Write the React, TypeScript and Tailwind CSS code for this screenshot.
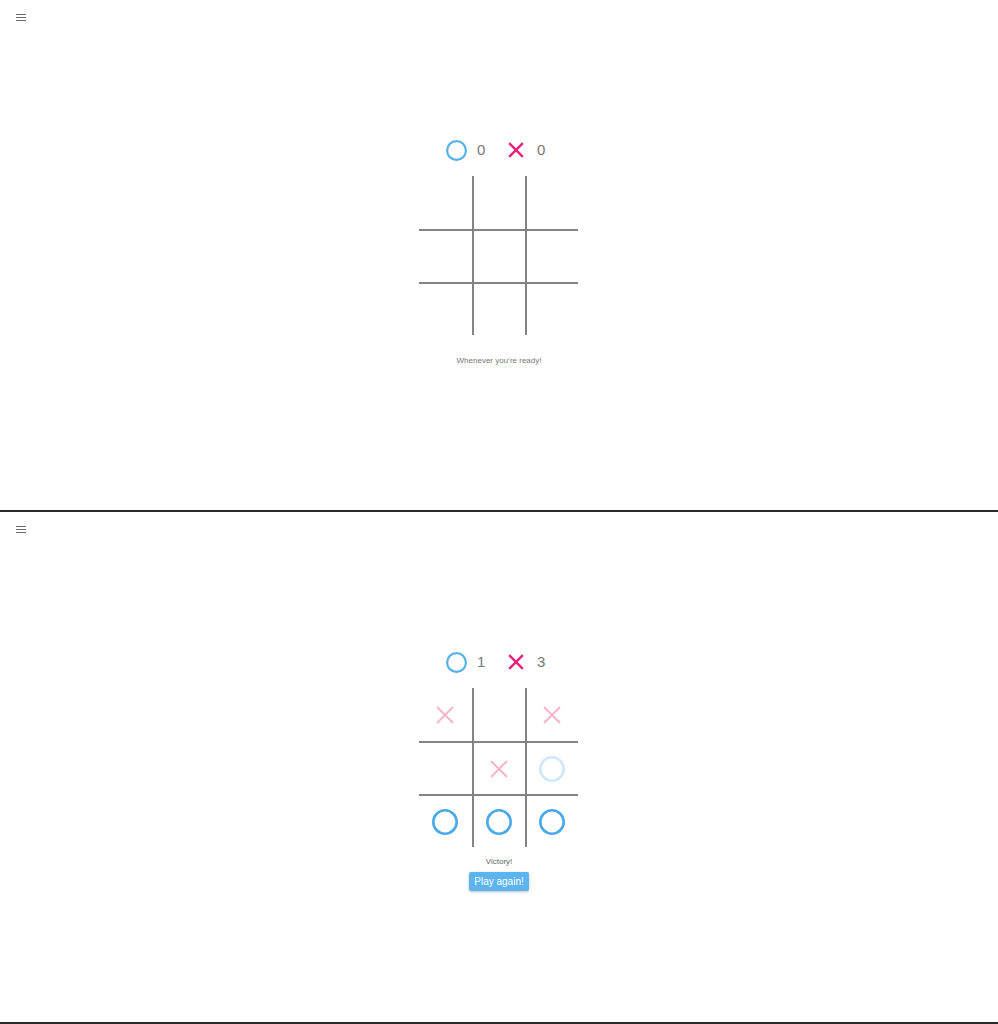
import React from "react";

type Mark = "x" | "o" | "o-faded" | null;

const font = { fontFamily: '"Liberation Sans", Arial, sans-serif' };

function Menu() {
  return (
    <div className="absolute left-[16px] top-[14px] flex w-[10px] flex-col gap-[2px]">
      <span className="block h-px w-full bg-[#6b6b6b]" />
      <span className="block h-px w-full bg-[#6b6b6b]" />
      <span className="block h-px w-full bg-[#6b6b6b]" />
    </div>
  );
}

function Ring({ size, stroke, color }: { size: number; stroke: number; color: string }) {
  const r = size / 2 - stroke / 2;
  return (
    <svg width={size} height={size} viewBox={`0 0 ${size} ${size}`} className="block">
      <circle cx={size / 2} cy={size / 2} r={r} fill="none" stroke={color} strokeWidth={stroke} />
    </svg>
  );
}

function Cross({ size, stroke, color }: { size: number; stroke: number; color: string }) {
  const p = stroke / 2;
  return (
    <svg width={size} height={size} viewBox={`0 0 ${size} ${size}`} className="block">
      <line x1={p} y1={p} x2={size - p} y2={size - p} stroke={color} strokeWidth={stroke} />
      <line x1={size - p} y1={p} x2={p} y2={size - p} stroke={color} strokeWidth={stroke} />
    </svg>
  );
}

function Score({ o, x }: { o: number; x: number }) {
  return (
    <div className="flex h-[22px] items-center text-[15px] text-[#777]" style={font}>
      <Ring size={21} stroke={2.2} color="#58b3ec" />
      <span className="ml-[10px] w-[31px]">{o}</span>
      <Cross size={16} stroke={2.4} color="#e8207c" />
      <span className="ml-[13px] w-[15px]">{x}</span>
    </div>
  );
}

function Cell({ mark, idx }: { mark: Mark; idx: number }) {
  const col = idx % 3;
  const row = Math.floor(idx / 3);
  const borders = `${col > 0 ? "border-l-2" : ""} ${row > 0 ? "border-t-2" : ""}`;
  return (
    <div className={`box-border flex h-[53px] w-[53px] items-center justify-center border-[#838383] ${borders}`}>
      {mark === "x" && <Cross size={18} stroke={2} color="#f5b3cd" />}
      {mark === "o" && <Ring size={26} stroke={2.6} color="#4aa9e8" />}
      {mark === "o-faded" && <Ring size={26} stroke={2.6} color="#cfe7f8" />}
    </div>
  );
}

function Board({ cells }: { cells: Mark[] }) {
  return (
    <div className="mr-[2px] grid w-[159px] grid-cols-3">
      {cells.map((m, i) => (
        <Cell key={i} mark={m} idx={i} />
      ))}
    </div>
  );
}

function Panel({ children }: { children: React.ReactNode }) {
  return (
    <section className="relative h-[512px] w-full border-b-2 border-[#2a2a2a] bg-white">
      <Menu />
      <div className="flex flex-col items-center pt-[139px]">{children}</div>
    </section>
  );
}

export default function App() {
  const empty: Mark[] = [null, null, null, null, null, null, null, null, null];
  const played: Mark[] = ["x", null, "x", null, "x", "o-faded", "o", "o", "o"];
  return (
    <div className="w-[998px] bg-white">
      <Panel>
        <Score o={0} x={0} />
        <div className="mt-[15px]">
          <Board cells={empty} />
        </div>
        <p className="mt-[20px] text-[8px] leading-[12px] text-[#777]" style={font}>
          Whenever you’re ready!
        </p>
      </Panel>
      <Panel>
        <Score o={1} x={3} />
        <div className="mt-[15px]">
          <Board cells={played} />
        </div>
        <p className="mt-[9px] text-[8px] leading-[12px] text-[#666]" style={font}>
          Victory!
        </p>
        <button
          className="mt-[4px] h-[19px] rounded-[2px] bg-[#5cb4f0] px-[5px] text-[10px] leading-[19px] text-white shadow-[0_1px_3px_rgba(0,0,0,0.25)]"
          style={font}
        >
          Play again!
        </button>
      </Panel>
    </div>
  );
}
